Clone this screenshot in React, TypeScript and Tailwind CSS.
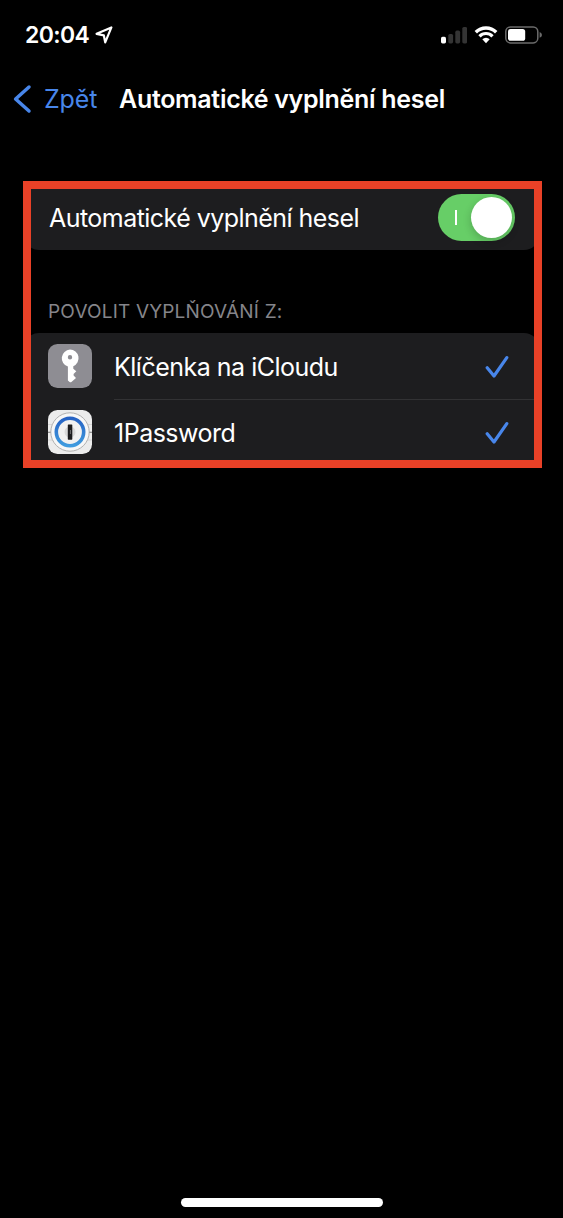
import React from "react";

const LocationArrow: React.FC = () => (
  <svg className="mb-px ml-[6px] h-[18px] w-[18px]" viewBox="0 0 18 18" fill="none" stroke="#fff" strokeWidth="2.2" strokeLinejoin="round">
    <path d="M16.4 1.4 L1.6 7.8 L8.8 9.3 L10.2 16.4 Z" />
  </svg>
);

const SignalBars: React.FC = () => (
  <svg className="h-[18px] w-[26px]" viewBox="0 0 26 18">
    <rect x="0" y="10.8" width="5" height="6.6" rx="1.6" fill="#fff" />
    <rect x="7.3" y="8" width="4.8" height="9.4" rx="1.6" fill="#343434" />
    <rect x="14.3" y="4.6" width="4.8" height="12.8" rx="1.6" fill="#343434" />
    <rect x="21.3" y="1" width="4.8" height="16.4" rx="1.6" fill="#343434" />
  </svg>
);

const WifiIcon: React.FC = () => (
  <svg className="ml-[7px] h-[18px] w-6" viewBox="0 0 24 18">
    <path d="M1.8 6.2 A14.4 14.4 0 0 1 22.2 6.2" fill="none" stroke="#fff" strokeWidth="3.4" />
    <path d="M5.5 10.3 A9 9 0 0 1 18.5 10.3" fill="none" stroke="#fff" strokeWidth="3.2" />
    <path d="M8.3 13.3 A5.2 5.2 0 0 1 15.7 13.3 L12 17.2 Z" fill="#fff" />
  </svg>
);

const BatteryIcon: React.FC = () => (
  <svg className="ml-[7px] h-[18px] w-[38px]" viewBox="0 0 38 18">
    <rect x="0.8" y="0.9" width="32" height="16" rx="4.6" fill="none" stroke="#6b6b6b" strokeWidth="1.5" />
    <rect x="3" y="3" width="17.2" height="11.8" rx="2.6" fill="#fff" />
    <path d="M34.6 6 Q37 7 37 8.9 Q37 10.8 34.6 11.8 Z" fill="#6b6b6b" />
  </svg>
);

const KeyIcon: React.FC = () => (
  <svg className="h-11 w-11 shrink-0" viewBox="0 0 44 44">
    <rect width="44" height="44" rx="9.5" fill="#8e8d93" />
    <path
      fillRule="evenodd"
      fill="#fff"
      d="M22 5.6 A8.7 8.7 0 0 1 25.3 22.3 V24.8 L28.3 27.3 L25.6 29.9 V31.4 L28 33.9 L23.4 38 Q22.5 38.6 21.6 37.9 L19.9 36.4 V22.6 A8.7 8.7 0 0 1 22 5.6 Z M22 11 A2.2 2.2 0 1 0 22 15.4 A2.2 2.2 0 1 0 22 11 Z"
    />
  </svg>
);

const OnePasswordIcon: React.FC = () => (
  <svg className="h-11 w-11 shrink-0" viewBox="0 0 44 44">
    <defs>
      <linearGradient id="ring" x1="0" y1="0" x2="0" y2="1">
        <stop offset="0" stopColor="#2763c4" />
        <stop offset="1" stopColor="#3f9bdf" />
      </linearGradient>
    </defs>
    <rect width="44" height="44" rx="9.5" fill="#ececec" />
    <path d="M0 14.5 H5 M0 30 H5 M39 14.5 H44 M39 30 H44" stroke="#d0d0d0" strokeWidth="0.8" />
    <path d="M0 22.2 H4 M40 22.2 H44" stroke="#777" strokeWidth="1.1" />
    <circle cx="22" cy="22" r="19.2" fill="#f7f7f7" stroke="#a9a9a9" strokeWidth="0.9" />
    <circle cx="22" cy="22" r="13.7" fill="#f1f1f1" stroke="url(#ring)" strokeWidth="3.6" />
    <circle cx="22" cy="22" r="5.5" fill="#d9d9d9" />
    <rect x="19.8" y="14.5" width="4.5" height="15.2" rx="0.6" fill="#1c1c1e" />
    <path d="M22.4 20 V24" stroke="#777" strokeWidth="0.9" />
  </svg>
);

const CheckIcon: React.FC = () => (
  <svg className="ml-auto mr-[30px] mt-[2px] h-6 w-6" viewBox="0 0 24 24" fill="none" stroke="#4886ea" strokeWidth="3.2" strokeLinecap="round" strokeLinejoin="round">
    <path d="M2.2 12.8 L9 21 L21.8 2.6" />
  </svg>
);

const providers = [
  { name: "Klíčenka na iCloudu", icon: <KeyIcon /> },
  { name: "1Password", icon: <OnePasswordIcon /> },
];

const App: React.FC = () => {
  return (
    <div className="flex h-[1218px] w-[563px] flex-col overflow-hidden bg-black font-['Inter',sans-serif] text-white">
      <header className="flex h-[70px] shrink-0 items-center justify-between pl-[25px] pr-[20px]">
        <div className="flex items-center">
          <span className="text-[23px] font-semibold leading-7 tracking-[-0.6px]">20:04</span>
          <LocationArrow />
        </div>
        <div className="flex items-center">
          <SignalBars />
          <WifiIcon />
          <BatteryIcon />
        </div>
      </header>

      <nav className="flex h-[58px] shrink-0 items-center pl-[13px] leading-8">
        <svg className="h-[30px] w-[19px]" viewBox="0 0 19 30" fill="none" stroke="#4886ea" strokeWidth="3.5" strokeLinecap="round" strokeLinejoin="round">
          <path d="M16 3 L2.6 15 L16 27" />
        </svg>
        <span className="ml-3 w-[75px] whitespace-nowrap text-[25px] tracking-[-0.1px] text-[#4886ea]">Zpět</span>
        <h1 className="whitespace-nowrap text-[25px] font-semibold tracking-[-0.3px]">Automatické vyplnění hesel</h1>
      </nav>

      <main className="ml-[23px] mt-[53px] h-[287px] w-[519px] shrink-0 overflow-hidden border-8 border-[#e94127]">
        {/* cards are wider than the frame, so only the tips of their corners show */}
        <div className="-ml-[7px] -mr-[5px] flex h-[61px] items-center justify-between rounded-b-[15px] bg-[#1d1d1f] pl-[25px] pr-[24px]">
          <span className="mb-[3px] whitespace-nowrap text-[25px] leading-8 tracking-[-0.54px]">Automatické vyplnění hesel</span>
          <div className="mb-1 flex h-[47px] w-[77px] items-center justify-between rounded-full bg-[#67ce67] pl-[17px] pr-[3px]">
            <span className="h-[15px] w-[2px] bg-white"></span>
            <span className="h-[41px] w-[41px] rounded-full bg-white shadow-[0_3px_8px_rgba(0,0,0,0.2)]"></span>
          </div>
        </div>

        <h2 className="flex h-[83px] items-end pb-[9px] pl-[17px] text-[19px] leading-6 tracking-[0.18px] text-[#85858a]">
          POVOLIT VYPLŇOVÁNÍ Z:
        </h2>

        <ul className="-ml-[7px] -mr-[5px] rounded-t-[15px] bg-[#1d1d1f]">
          {providers.map((provider, i) => (
            <li key={provider.name} className="flex h-[66px] items-center pl-6">
              {provider.icon}
              <div className="relative ml-[22px] flex h-full flex-1 items-center">
                <span className="mt-px whitespace-nowrap text-[25px] leading-8 tracking-[-0.5px]">{provider.name}</span>
                <CheckIcon />
                {i < providers.length - 1 && <span className="absolute inset-x-0 -bottom-px h-px bg-[#323234]"></span>}
              </div>
            </li>
          ))}
        </ul>
      </main>

      <div className="mx-auto mb-[11px] mt-auto h-[9px] w-[202px] rounded-full bg-white"></div>
    </div>
  );
};

export default App;
